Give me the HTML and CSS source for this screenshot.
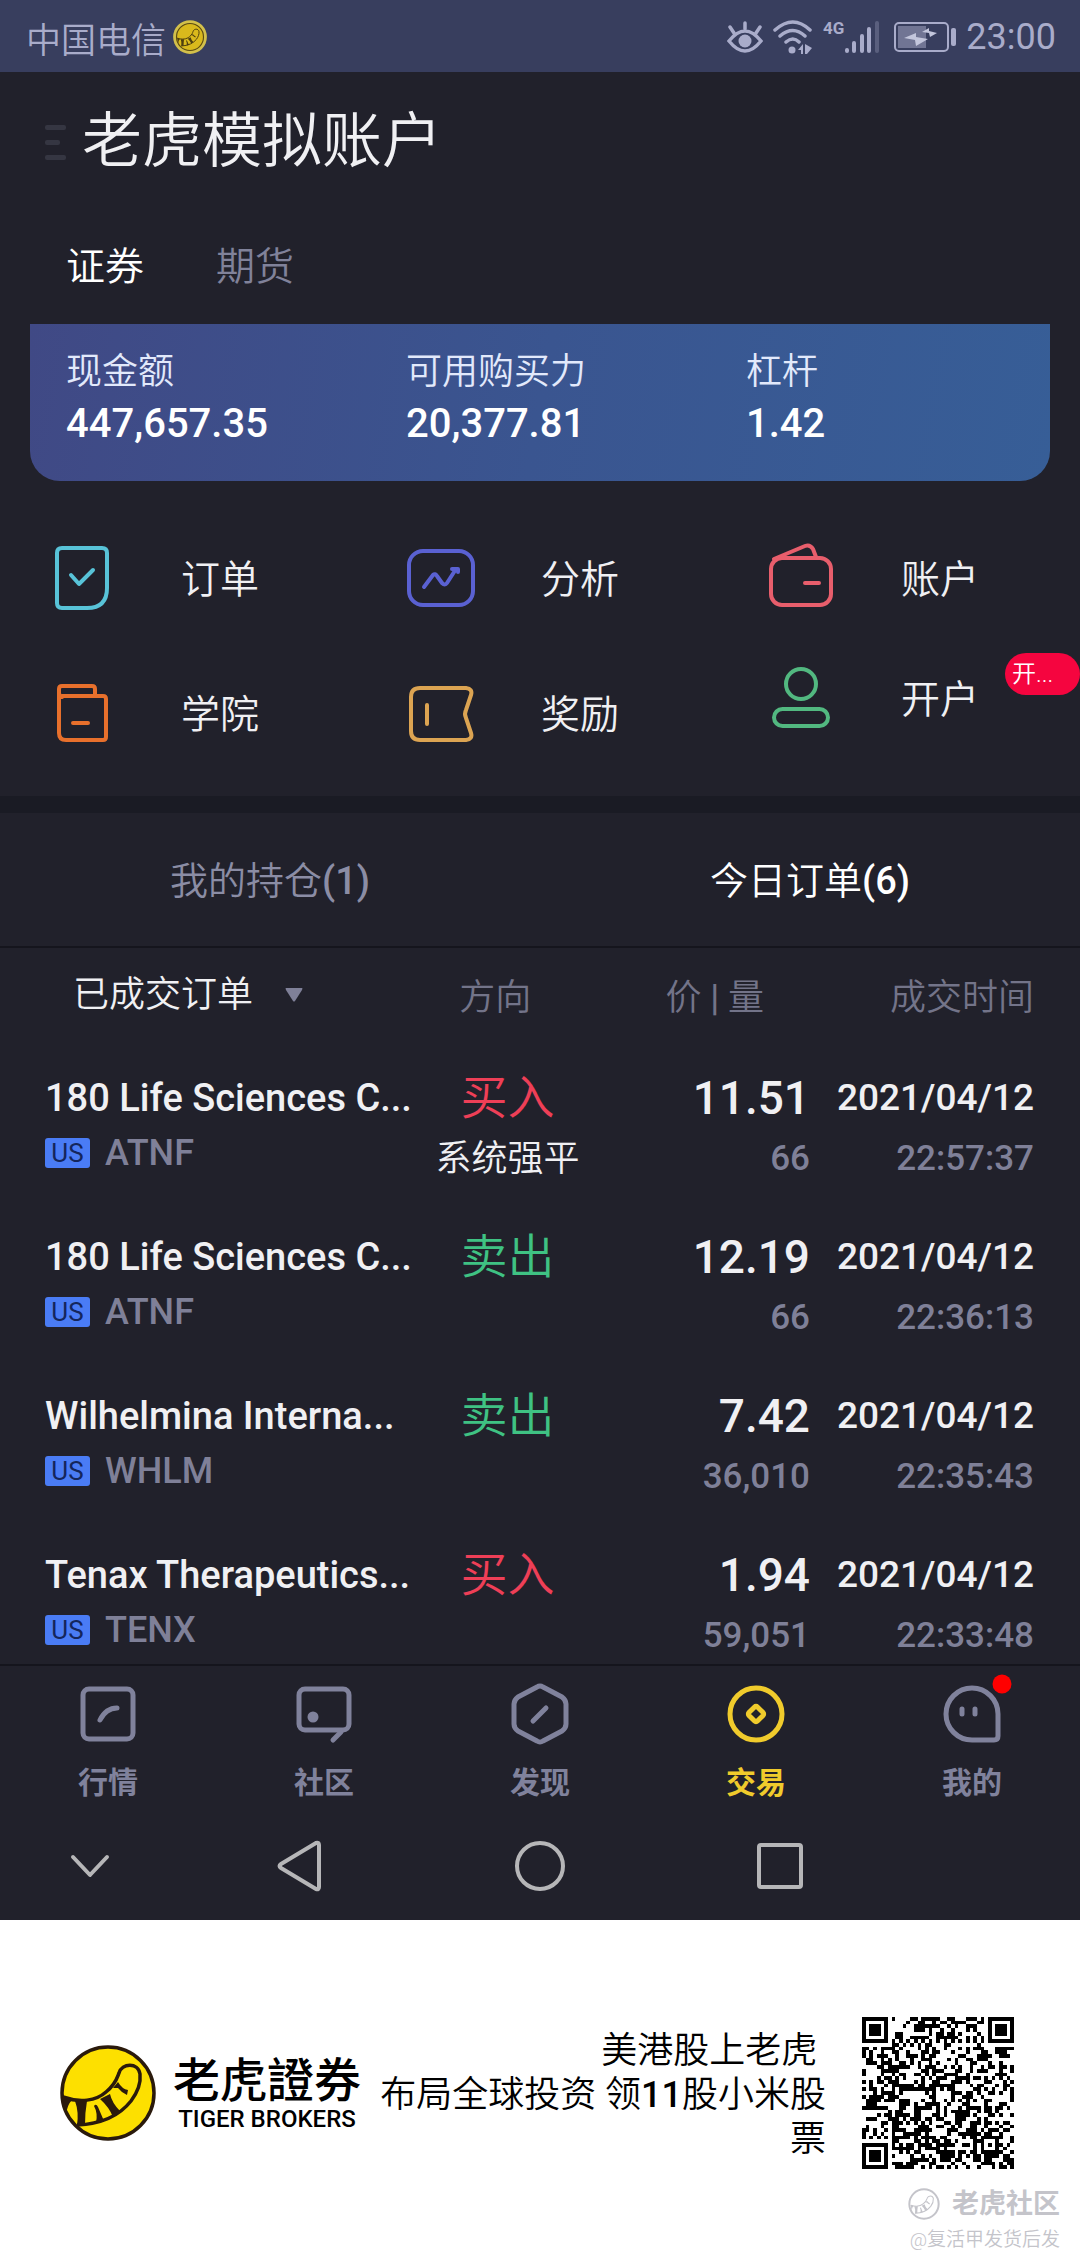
FILE: index.html
```html
<!DOCTYPE html>
<html lang="zh-CN">
<head>
    <meta charset="UTF-8">
    <meta name="viewport" content="width=device-width, initial-scale=1">
    <title>老虎模拟账户</title>
    <link rel="stylesheet" href="styles.css">
</head>
<body>
    <!-- tiger tail logo, shared by the status bar, the footer and the watermark -->
    <svg class="defs" width="0" height="0" aria-hidden="true">
        <symbol id="tail" viewBox="0 0 96 96">
            <path fill="none" stroke="currentColor" stroke-width="3.5" stroke-linejoin="round" d="M3 52C20 58 36 56 46 47C56 39 57 33 59 28C62 18 78 17 80 29C81 38 77 48 71 56C60 70 42 79 17 80"/>
            <path fill="currentColor" d="M2 51L12 55Q7 60 6 70ZM15 56H27Q25 67 25 80H17Q19 67 15 56ZM34 61Q36 58 38 62L44 76L36 78Q38 68 34 61ZM40 54L50 49Q52 58 60 66L53 72Q49 62 40 54ZM53 43L58 37Q62 44 68 45L67 50Q62 48 58 43Z"/>
        </symbol>
    </svg>

    <div class="app">
        <div class="status-bar">
            <span class="carrier">中国电信</span>
            <svg class="coin" width="36" height="36" viewBox="0 0 96 96">
                <circle cx="48" cy="48" r="45" fill="#d3c04a"/>
                <circle cx="48" cy="48" r="36" fill="#d9b91c" stroke="#5a4a12" stroke-width="3"/>
                <use href="#tail" x="12" y="12" width="72" height="72"/>
            </svg>
            <div class="status-icons">
                <svg width="36" height="34" viewBox="0 0 36 34" fill="none" stroke="currentColor" stroke-width="3.5" stroke-linecap="round">
                    <path d="M2 21Q18 1 34 21Q18 41 2 21ZM18 3V9M3 7L7 13M33 7L29 13"/>
                    <circle cx="18" cy="21" r="6.5" fill="currentColor" stroke="none"/>
                </svg>
                <svg width="40" height="34" viewBox="0 0 40 34" fill="none" stroke="currentColor" stroke-width="3.5" stroke-linecap="round">
                    <path d="M2 10Q20 -6 37 10M7 16Q20 5 32 16M13 22Q20 16 26 22"/>
                    <circle cx="19" cy="30" r="3.5" fill="currentColor" stroke="none"/>
                    <path fill="currentColor" stroke="none" d="M25 30L30 24V34H28V30ZM32 24L39 28L34 34H32Z"/>
                </svg>
                <div class="signal">
                    <span class="network">4G</span>
                    <svg width="36" height="34" viewBox="0 0 36 34" stroke="currentColor" stroke-width="4" stroke-linecap="round">
                        <path d="M3 30V31M10 23V31M18 16V31M25 9V31"/>
                        <path opacity=".3" d="M33 3V31"/>
                    </svg>
                </div>
                <svg width="62" height="32" viewBox="0 0 62 32">
                    <rect x="1" y="2" width="53" height="28" rx="4" fill="none" stroke="currentColor" stroke-width="2"/>
                    <rect x="4" y="5" width="28" height="22" fill="currentColor" opacity=".5"/>
                    <rect x="57" y="7" width="5" height="18" rx="2" fill="currentColor"/>
                    <path fill="#c3c6dc" d="M10 17L22 12V16L34 18L22 25L21 19ZM28 11L35 7V10L43 12L36 16L35 12Z"/>
                </svg>
                <span class="clock">23:00</span>
            </div>
        </div>

        <header class="title-bar">
            <button class="menu" type="button" aria-label="菜单"><i></i><i></i><i></i></button>
            <h1>老虎模拟账户</h1>
        </header>

        <nav class="account-tabs">
            <button class="active" type="button">证券</button>
            <button type="button">期货</button>
        </nav>

        <dl class="summary">
            <div><dt>现金额</dt><dd>447,657.35</dd></div>
            <div><dt>可用购买力</dt><dd>20,377.81</dd></div>
            <div><dt>杠杆</dt><dd>1.42</dd></div>
        </dl>

        <nav class="shortcuts">
            <a class="order" href="#">
                <svg viewBox="0 0 72 72"><path d="M16 6H56Q61 6 61 11V46Q61 66 41 66H16Q11 66 11 61V11Q11 6 16 6ZM25 33L33 42L47 28"/></svg>
                <span>订单</span>
            </a>
            <a class="analysis" href="#">
                <svg viewBox="0 0 72 72"><rect x="3" y="9" width="64" height="54" rx="14"/><path d="M18 45L27 33Q29 31 31 34L36 41Q39 44 41 41L50 27M46 27H52V30"/></svg>
                <span>分析</span>
            </a>
            <a class="wallet" href="#">
                <svg viewBox="0 0 72 72"><rect x="5" y="16" width="60" height="47" rx="11"/><path d="M8 17L39 4Q44 2 47 7L50 15M39 41H53"/></svg>
                <span>账户</span>
            </a>
            <a class="academy" href="#">
                <svg viewBox="0 0 72 72"><path d="M16 20Q13 19 13 16V12Q13 9 16 9H46Q49 9 49 12V19M16 19H57Q60 19 60 22V60Q60 63 57 63H20Q13 63 13 56V14M27 46H42"/></svg>
                <span>学院</span>
            </a>
            <a class="reward" href="#">
                <svg viewBox="0 0 72 72"><path d="M14 11H60Q67 12 65 18L60 33Q58 37 60 41L65 56Q67 62 60 63H14Q5 63 5 54V20Q5 11 14 11ZM21 28V47"/></svg>
                <span>奖励</span>
            </a>
            <a class="open-account" href="#">
                <svg viewBox="0 0 72 72"><circle cx="35" cy="22" r="15"/><rect x="8" y="47" width="54" height="17" rx="8.5"/></svg>
                <span>开户</span>
                <b class="badge">开...</b>
            </a>
        </nav>

        <nav class="list-tabs">
            <button type="button">我的持仓<b>(1)</b></button>
            <button class="active" type="button">今日订单<b>(6)</b></button>
        </nav>

        <table class="orders">
            <colgroup>
                <col class="col-name"><col class="col-side"><col class="col-price"><col class="col-time">
            </colgroup>
            <thead>
                <tr>
                    <th>
                        <label class="filter">
                            <select aria-label="订单状态"><option>已成交订单</option></select>
                            <svg width="20" height="16" viewBox="0 0 20 16"><path d="M2 1H18Q19 1 18 3L11 14Q10 15 9 14L2 3Q1 1 2 1Z"/></svg>
                        </label>
                    </th>
                    <th class="side-head">方向</th>
                    <th class="price-head">价 <b>|</b> 量</th>
                    <th class="time-head">成交时间</th>
                </tr>
            </thead>
            <tbody>
                <tr>
                    <td><div class="name">180 Life Sciences C...</div><div class="ticker"><i>US</i>ATNF</div></td>
                    <td class="side"><div class="buy">买入</div><div class="note">系统强平</div></td>
                    <td class="num"><div class="price">11.51</div><div class="sub">66</div></td>
                    <td class="num"><div class="date">2021/04/12</div><div class="sub">22:57:37</div></td>
                </tr>
                <tr>
                    <td><div class="name">180 Life Sciences C...</div><div class="ticker"><i>US</i>ATNF</div></td>
                    <td class="side"><div class="sell">卖出</div></td>
                    <td class="num"><div class="price">12.19</div><div class="sub">66</div></td>
                    <td class="num"><div class="date">2021/04/12</div><div class="sub">22:36:13</div></td>
                </tr>
                <tr>
                    <td><div class="name">Wilhelmina Interna...</div><div class="ticker"><i>US</i>WHLM</div></td>
                    <td class="side"><div class="sell">卖出</div></td>
                    <td class="num"><div class="price">7.42</div><div class="sub">36,010</div></td>
                    <td class="num"><div class="date">2021/04/12</div><div class="sub">22:35:43</div></td>
                </tr>
                <tr>
                    <td><div class="name">Tenax Therapeutics...</div><div class="ticker"><i>US</i>TENX</div></td>
                    <td class="side"><div class="buy">买入</div></td>
                    <td class="num"><div class="price">1.94</div><div class="sub">59,051</div></td>
                    <td class="num"><div class="date">2021/04/12</div><div class="sub">22:33:48</div></td>
                </tr>
            </tbody>
        </table>

        <nav class="tab-bar">
            <a href="#">
                <svg viewBox="0 0 60 60"><rect x="5" y="5" width="50" height="50" rx="6"/><path d="M22 36Q28 24 39 24"/></svg>
                <span>行情</span>
            </a>
            <a href="#">
                <svg viewBox="0 0 60 60"><rect x="5" y="5" width="50" height="41" rx="6"/><path d="M47 48L39 56"/><circle class="solid" cx="19" cy="33" r="5.5"/></svg>
                <span>社区</span>
            </a>
            <a href="#">
                <svg viewBox="0 0 60 60"><path d="M27 3Q30 1 33 3L52 13Q56 16 56 20V40Q56 44 52 47L33 57Q30 59 27 57L8 47Q4 44 4 40V20Q4 16 8 13ZM23 37L36 24"/></svg>
                <span>发现</span>
            </a>
            <a class="active" href="#">
                <svg viewBox="0 0 60 60"><circle cx="30" cy="30" r="26"/><rect x="24" y="24" width="12" height="12" rx="2" transform="rotate(45 30 30)"/></svg>
                <span>交易</span>
            </a>
            <a href="#">
                <svg viewBox="0 0 60 60"><path d="M30 4A26 26 0 0 0 30 56H52Q56 56 56 52V30A26 26 0 0 0 30 4ZM20 25V30M33 25V30"/><circle class="dot" cx="60" cy="0" r="9.5"/></svg>
                <span>我的</span>
            </a>
        </nav>

        <div class="system-nav">
            <button type="button" aria-label="收起"><svg viewBox="0 0 60 60"><path d="M13 21L30 39L47 21"/></svg></button>
            <button type="button" aria-label="返回"><svg viewBox="0 0 60 60"><path d="M11 28L46 7Q49 6 49 9V51Q49 54 46 53L11 32Q8 30 11 28Z"/></svg></button>
            <button type="button" aria-label="主屏幕"><svg viewBox="0 0 60 60"><circle cx="30" cy="30" r="23"/></svg></button>
            <button type="button" aria-label="最近任务"><svg viewBox="0 0 60 60"><rect x="9" y="9" width="42" height="42" rx="2"/></svg></button>
        </div>
    </div>

    <footer class="promo">
        <div class="promo-main">
            <svg class="logo" viewBox="0 0 96 96">
                <circle cx="48" cy="48" r="46" fill="#fde000" stroke="#2a1a0c" stroke-width="3.5"/>
                <use href="#tail"/>
            </svg>
            <div class="brand">
                <strong lang="zh-TW">老虎證券</strong>
                <span>TIGER BROKERS</span>
            </div>
            <p class="slogan">美港股上老虎&nbsp;<br>布局全球投资 领<b>11</b>股小米股票</p>
            <svg class="qr" viewBox="0 0 41 41" role="img" aria-label="二维码"><path id="qr-path"/></svg>
        </div>
        <div class="watermark">
            <div class="community">
                <svg viewBox="0 0 96 96"><circle cx="48" cy="48" r="44" fill="none" stroke="currentColor" stroke-width="6"/><use href="#tail" x="6" y="6" width="84" height="84"/></svg>
                <span>老虎社区</span>
            </div>
            <span class="author">@复活甲发货后发</span>
        </div>
    </footer>

    <script src="qr.js"></script>
</body>
</html>
```
FILE: styles.css
```css
* {
    box-sizing: border-box;
}

body {
    margin: 0;
    background: #fff;
    color: #f0f0f3;
    font-family: Roboto, "Noto Sans CJK SC", sans-serif;
    font-weight: 350;
}

button {
    padding: 0;
    border: 0;
    background: none;
    color: inherit;
    font: inherit;
}

a {
    color: inherit;
    text-decoration: none;
}

.defs {
    display: block;
}

.app {
    background: #21212b;
}

/* status bar */
.status-bar {
    display: flex;
    align-items: center;
    height: 72px;
    padding: 2px 24px 0 26px;
    background: #383e5e;
    color: #a9acca;
    font-size: 36px;
}

.carrier {
    font-size: 35px;
}

.coin {
    margin-left: 6px;
    color: #4d3f10;
}

.status-icons {
    display: flex;
    align-items: center;
    gap: 10px;
    margin-left: auto;
}

.signal {
    display: flex;
    align-items: flex-start;
    margin-right: 4px;
}

.network {
    font-size: 17px;
    font-weight: 700;
    line-height: 16px;
}

.clock {
    font-weight: 400;
}

/* account header */
.title-bar {
    display: flex;
    align-items: center;
    gap: 16px;
    padding: 34px 45px 26px;
}

.title-bar h1 {
    margin: 0;
    font-size: 60px;
    font-weight: 350;
    line-height: 72px;
}

.menu {
    display: flex;
    flex-direction: column;
    gap: 10px;
    width: 21px;
}

.menu i {
    height: 5px;
    border-radius: 2px;
    background: #353642;
}

.menu i:nth-child(2) {
    width: 15px;
}

.account-tabs {
    display: flex;
    gap: 72px;
    height: 120px;
    padding: 0 66px 2px;
    color: #80829a;
    font-size: 39px;
}

.account-tabs .active,
.list-tabs .active {
    color: #fff;
}

.summary {
    display: grid;
    grid-template-columns: repeat(3, 1fr);
    margin: 0 30px;
    padding: 21px 0 33px;
    border-radius: 0 0 30px 30px;
    background: linear-gradient(100deg, #404985, #3a5590 50%, #375e97);
    color: #e2e9fb;
}

.summary div {
    padding-left: 36px;
}

.summary dt {
    font-size: 36px;
    line-height: 54px;
}

.summary dd {
    margin: 0;
    color: #fff;
    font-size: 40px;
    font-weight: 500;
    line-height: 49px;
}

/* shortcuts */
.shortcuts {
    display: grid;
    grid-template-columns: repeat(3, 1fr);
    grid-auto-rows: 135px;
    padding: 29px 0 16px;
    border-bottom: 17px solid #1a1b24;
    font-size: 39px;
}

.shortcuts a {
    position: relative;
    display: flex;
    align-items: center;
    gap: 63px;
    padding-left: 46px;
}

.shortcuts svg {
    width: 72px;
    height: 72px;
    fill: none;
    stroke: currentColor;
    stroke-width: 4;
    stroke-linecap: round;
    stroke-linejoin: round;
}

.shortcuts span {
    padding-bottom: 4px;
    color: #f0f0f3;
}

.order { color: #58c3d8; }
.analysis { color: #5a61d2; }
.wallet { color: #e85e6c; }
.academy { color: #e8702c; }
.reward { color: #dca452; }

.shortcuts .open-account {
    padding-bottom: 30px;
    color: #52b880;
}

.badge {
    position: absolute;
    top: 8px;
    right: 0;
    width: 75px;
    padding-left: 7px;
    border-radius: 21px;
    background: #f5053f;
    color: #fff;
    font-size: 24px;
    font-weight: 350;
    line-height: 42px;
}

/* order list */
.list-tabs {
    display: grid;
    grid-template-columns: 1fr 1fr;
    height: 135px;
    padding-bottom: 4px;
    border-bottom: 2px solid #15151d;
    color: #8b8da5;
    font-size: 38px;
}

.list-tabs b,
.price-head b {
    font-weight: 500;
}

.orders {
    width: 100%;
    table-layout: fixed;
    border-collapse: collapse;
}

.col-name { width: 39%; }
.col-side { width: 16%; }
.col-price { width: 20%; }
.col-time { width: 25%; }

.orders th {
    height: 94px;
    padding: 0 0 2px;
    color: #737489;
    font-size: 36px;
    font-weight: 350;
    text-align: right;
}

.filter {
    display: flex;
    align-items: center;
    gap: 30px;
    padding: 2px 0 0 73px;
}

.filter select {
    padding: 0;
    border: 0;
    appearance: none;
    background: none;
    color: #f0f0f3;
    font: inherit;
}

.filter svg {
    fill: #7f8098;
}

.orders .side-head {
    padding-left: 38px;
    text-align: left;
}

.orders .price-head {
    padding-right: 46px;
}

.orders .time-head {
    padding-right: 46px;
}

.orders td {
    padding: 32px 0 18px;
    line-height: 48px;
    vertical-align: top;
    white-space: nowrap;
}

.orders tr:last-child td {
    padding-bottom: 4px;
}

.orders td:first-child {
    padding-left: 45px;
}

.name {
    font-size: 38px;
    font-weight: 500;
}

.date {
    font-size: 37px;
    font-weight: 500;
}

.ticker {
    display: flex;
    align-items: center;
    gap: 15px;
    margin-top: 7px;
    color: #7f8098;
    font-size: 36px;
    font-weight: 500;
}

.ticker i {
    width: 45px;
    border-radius: 3px;
    background: #4a7cf5;
    color: #14265c;
    font: 400 26px/30px Roboto, sans-serif;
    text-align: center;
}

.side {
    text-align: center;
}

.buy,
.sell {
    font-size: 47px;
}

.buy { color: #ee3f57; }
.sell { color: #3fc283; }

.note {
    margin-top: 13px;
    font-size: 36px;
}

.num {
    text-align: right;
}

.orders .num:last-child {
    padding-right: 46px;
}

.price {
    font-size: 46px;
    font-weight: 500;
}

.sub {
    margin-top: 13px;
    color: #7f8098;
    font-size: 35px;
    font-weight: 500;
}

/* bottom bars */
.tab-bar {
    display: grid;
    grid-template-columns: repeat(5, 1fr);
    padding: 18px 0 8px;
    border-top: 2px solid #15151d;
    color: #80829c;
    font-size: 30px;
    font-weight: 700;
}

.tab-bar a {
    display: flex;
    flex-direction: column;
    align-items: center;
    gap: 19px;
    line-height: 40px;
}

.tab-bar .active {
    color: #f0cb2c;
}

.tab-bar svg,
.system-nav svg {
    width: 60px;
    height: 60px;
    overflow: visible;
    fill: none;
    stroke: currentColor;
    stroke-width: 5;
    stroke-linecap: round;
    stroke-linejoin: round;
}

.tab-bar .solid {
    fill: currentColor;
    stroke: none;
}

.tab-bar .dot {
    fill: #f00;
    stroke: none;
}

.system-nav {
    display: grid;
    grid-template-columns: 3fr 4fr 4fr 4fr 3fr;
    height: 109px;
    color: #b6b6b8;
}

.system-nav svg {
    display: block;
    margin: 0 auto;
    stroke-width: 4;
}

/* promo footer */
.promo {
    padding: 97px 20px 7px 60px;
    color: #000;
}

.promo-main {
    display: flex;
    align-items: center;
    padding-right: 46px;
}

.logo {
    flex: none;
    width: 96px;
    height: 96px;
    color: #2a1a0c;
}

.brand {
    flex: none;
    display: flex;
    flex-direction: column;
    align-items: center;
    margin-left: 17px;
    padding-top: 4px;
}

.brand strong {
    font-size: 47px;
    font-weight: 500;
    line-height: 48px;
}

.brand span {
    font-size: 24px;
    font-weight: 500;
    line-height: 28px;
}

.slogan {
    flex: 1;
    margin: 0 36px 0 12px;
    padding-top: 4px;
    font-size: 36px;
    line-height: 44px;
    text-align: right;
}

.slogan b {
    font-weight: 500;
}

.qr {
    flex: none;
    width: 152px;
    height: 152px;
    shape-rendering: crispEdges;
}

.watermark {
    display: flex;
    flex-direction: column;
    align-items: flex-end;
    margin-top: 16px;
    color: #c4c4ca;
    font-size: 19px;
    line-height: 34px;
}

.community {
    display: flex;
    align-items: center;
    gap: 12px;
    font-size: 27px;
    font-weight: 700;
    line-height: 38px;
}

.community svg {
    width: 32px;
    height: 32px;
}
```
FILE: qr.js
```js
const size = 41;
let seed = 20210412;

function nextBit() {
    seed = (seed * 1103515245 + 12345) % 2147483648;
    return seed / 2147483648 > 0.49;
}

// concentric squares: 7x7 finder (radius 3) or 5x5 alignment (radius 2)
function ring(x, y, cx, cy, radius) {
    const d = Math.max(Math.abs(x - cx), Math.abs(y - cy));
    if (d > radius + (radius === 3 ? 1 : 0)) return null;
    return radius === 3 ? d !== 2 && d !== 4 : d !== 1;
}

function moduleAt(x, y) {
    const marks = [[3, 3, 3], [37, 3, 3], [3, 37, 3], [34, 34, 2]];
    for (const [cx, cy, radius] of marks) {
        const dark = ring(x, y, cx, cy, radius);
        if (dark !== null) return dark;
    }
    if (x === 6 || y === 6) return (x + y) % 2 === 0;
    return nextBit();
}

let d = '';
for (let y = 0; y < size; y++) {
    for (let x = 0; x < size; x++) {
        if (moduleAt(x, y)) d += `M${x} ${y}h1v1h-1z`;
    }
}
document.getElementById('qr-path').setAttribute('d', d);
```
